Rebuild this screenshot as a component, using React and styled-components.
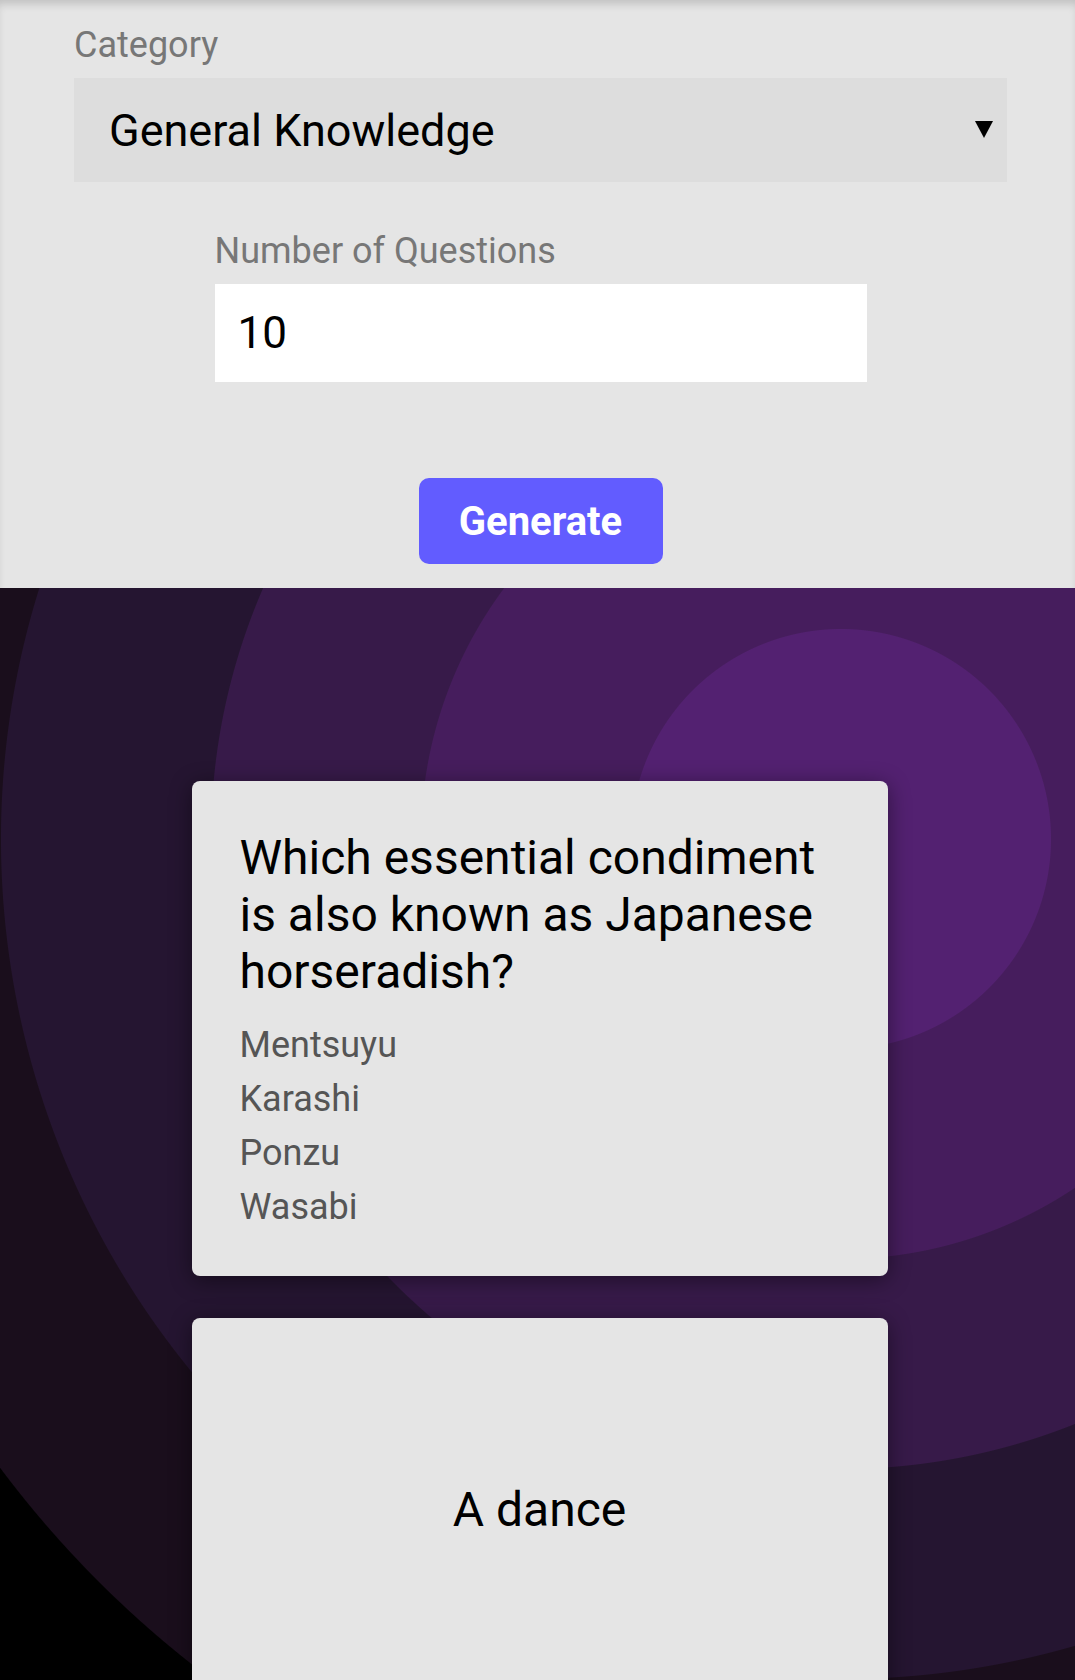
import React from 'react';
import styled, { createGlobalStyle } from 'styled-components';

const GlobalStyle = createGlobalStyle`
  html, body {
    margin: 0;
    padding: 0;
  }
  body {
    font-family: Roboto, "Noto Sans", "Liberation Sans", sans-serif;
    background: #000;
  }
  * {
    box-sizing: border-box;
  }
`;

const Page = styled.div`
  display: flex;
  flex-direction: column;
  height: 1680px;
  overflow: hidden;
`;

const FormSection = styled.section`
  display: flex;
  flex-direction: column;
  padding: 24px 68px 24px 74px;
  background: #e5e5e5;
  box-shadow: inset 0 7px 8px -3px rgba(0, 0, 0, 0.16);
`;

const Field = styled.div`
  display: flex;
  flex-direction: column;
  gap: 12px;
  width: ${(p) => (p.narrow ? '652px' : '100%')};
  align-self: center;
  margin-top: ${(p) => p.top || 0}px;
`;

const Label = styled.label`
  font-size: 36px;
  line-height: 42px;
  color: #777777;
`;

const SelectWrap = styled.div`
  position: relative;
`;

const Select = styled.select`
  appearance: none;
  -webkit-appearance: none;
  display: block;
  width: 100%;
  height: 104px;
  padding: 0 70px 0 35px;
  border: none;
  border-radius: 0;
  outline: none;
  background: #dddddd;
  color: #000;
  font-family: inherit;
  font-size: 45px;
`;

const Arrow = styled.span`
  position: absolute;
  right: 14px;
  top: 43px;
  width: 0;
  height: 0;
  border-left: 9px solid transparent;
  border-right: 9px solid transparent;
  border-top: 17px solid #000;
  pointer-events: none;
`;

const Input = styled.input`
  display: block;
  width: 100%;
  height: 98px;
  padding: 0 23px;
  border: none;
  outline: none;
  background: #ffffff;
  color: #000;
  font-family: inherit;
  font-size: 44px;
`;

const GenerateButton = styled.button`
  align-self: center;
  margin-top: 96px;
  width: 244px;
  height: 86px;
  border: none;
  border-radius: 10px;
  background: #625cff;
  color: #ffffff;
  font-family: inherit;
  font-weight: 700;
  font-size: 40px;
  cursor: pointer;
`;

const QuizSection = styled.section`
  flex: 1;
  display: flex;
  flex-direction: column;
  align-items: center;
  gap: 42px;
  padding: 193px 69px 0 73px;
  background: radial-gradient(
    circle at 841px 251px,
    #532171 0,
    #532171 209.5px,
    #461d5d 210.5px,
    #461d5d 419.5px,
    #371a49 420.5px,
    #371a49 629.5px,
    #251531 630.5px,
    #251531 839.5px,
    #1a0e1c 840.5px,
    #1a0e1c 1049.5px,
    #000000 1050.5px
  );
`;

const Card = styled.div`
  flex-shrink: 0;
  width: 696px;
  min-height: ${(p) => (p.flip ? '376px' : 'auto')};
  display: flex;
  flex-direction: column;
  justify-content: ${(p) => (p.flip ? 'center' : 'flex-start')};
  align-items: ${(p) => (p.flip ? 'center' : 'stretch')};
  padding: 48px 48px 42px;
  border-radius: 8px;
  background: #e5e5e5;
  box-shadow: 0 4px 22px rgba(0, 0, 0, 0.45);
`;

const Question = styled.h2`
  margin: 0 0 18px;
  font-size: 48px;
  font-weight: 400;
  line-height: 57px;
  color: #000;
`;

const AnswerList = styled.ul`
  margin: 0;
  padding: 0;
  list-style: none;
`;

const Answer = styled.li`
  font-size: 36px;
  line-height: 54px;
  color: #555555;
`;

const BackText = styled.p`
  margin: 0;
  font-size: 48px;
  line-height: 57px;
  color: #000;
`;

const answers = ['Mentsuyu', 'Karashi', 'Ponzu', 'Wasabi'];

const App = () => {
  return (
    <Page>
      <GlobalStyle />
      <FormSection>
        <Field>
          <Label htmlFor="category">Category</Label>
          <SelectWrap>
            <Select id="category" defaultValue="9">
              <option value="9">General Knowledge</option>
              <option value="10">Entertainment: Books</option>
              <option value="11">Entertainment: Film</option>
            </Select>
            <Arrow />
          </SelectWrap>
        </Field>
        <Field narrow top={48}>
          <Label htmlFor="amount">Number of Questions</Label>
          <Input id="amount" type="text" inputMode="numeric" defaultValue="10" />
        </Field>
        <GenerateButton>Generate</GenerateButton>
      </FormSection>

      <QuizSection>
        <Card>
          <Question>Which essential condiment is also known as Japanese horseradish?</Question>
          <AnswerList>
            {answers.map((a) => (
              <Answer key={a}>{a}</Answer>
            ))}
          </AnswerList>
        </Card>
        <Card flip>
          <BackText>A dance</BackText>
        </Card>
      </QuizSection>
    </Page>
  );
};

export default App;
